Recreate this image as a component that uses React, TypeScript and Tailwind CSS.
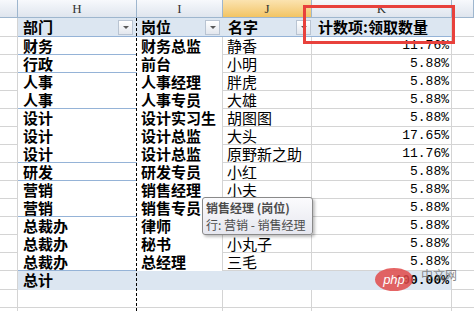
import React from 'react'

const rows = [
  { dept: '财务', pos: '财务总监', name: '静香', val: '11.76%', end: true },
  { dept: '行政', pos: '前台', name: '小明', val: '5.88%', end: true },
  { dept: '人事', pos: '人事经理', name: '胖虎', val: '5.88%', end: false },
  { dept: '人事', pos: '人事专员', name: '大雄', val: '5.88%', end: true },
  { dept: '设计', pos: '设计实习生', name: '胡图图', val: '5.88%', end: false },
  { dept: '设计', pos: '设计总监', name: '大头', val: '17.65%', end: false },
  { dept: '设计', pos: '设计总监', name: '原野新之助', val: '11.76%', end: true },
  { dept: '研发', pos: '研发专员', name: '小红', val: '5.88%', end: true },
  { dept: '营销', pos: '销售经理', name: '小夫', val: '5.88%', end: false },
  { dept: '营销', pos: '销售专员', name: '风间', val: '5.88%', end: true },
  { dept: '总裁办', pos: '律师', name: '阿呆', val: '5.88%', end: false },
  { dept: '总裁办', pos: '秘书', name: '小丸子', val: '5.88%', end: false },
  { dept: '总裁办', pos: '总经理', name: '三毛', val: '5.88%', end: true },
]

const cjk = "font-['Noto_Sans_CJK_SC',sans-serif]"

function Dropdown() {
  return (
    <div className="w-[15px] h-[15px] border border-[#b9c4d2] bg-gradient-to-b from-[#ffffff] to-[#e3e7ee] flex items-center justify-center">
      <div className="w-0 h-0 border-l-[3px] border-r-[3px] border-t-[3px] border-l-transparent border-r-transparent border-t-[#5a5a5a]" />
    </div>
  )
}

function ColHead({ label, w, active }: { label: string; w: string; active?: boolean }) {
  return (
    <div
      className={`${w} h-[18px] border-r border-b border-[#9eb6ce] flex items-center justify-center text-[13px] text-[#333] font-['Liberation_Serif',serif] ${
        active ? 'bg-gradient-to-b from-[#fbe3b0] to-[#f2c462]' : 'bg-gradient-to-b from-[#f7f9fc] to-[#dfe5ee]'
      }`}
    >
      {label}
    </div>
  )
}

export default function App() {
  return (
    <div className={`relative w-[474px] h-[311px] overflow-hidden bg-white ${cjk} text-[15px] leading-[18px] text-black`}>
      {/* column letters */}
      <div className="flex">
        <ColHead label="" w="w-[18px]" />
        <ColHead label="H" w="w-[119px]" />
        <ColHead label="I" w="w-[86px]" />
        <ColHead label="J" w="w-[89px]" active />
        <ColHead label="K" w="w-[140px]" />
        <ColHead label="" w="w-[22px]" />
      </div>

      {/* pivot header */}
      <div className="flex h-[19px]">
        <div className="w-[18px] border-r border-b border-[#d4d4d4]" />
        <div className="w-[119px] bg-[#dce6f1] border-b border-[#95b3d7] flex items-center justify-between pl-[5px] pr-[4px] font-bold">
          <span>部门</span>
          <Dropdown />
        </div>
        <div className="w-[86px] bg-[#dce6f1] border-b border-[#95b3d7] flex items-center justify-between pl-[4px] pr-[3px] font-bold">
          <span>岗位</span>
          <Dropdown />
        </div>
        <div className="w-[89px] bg-[#dce6f1] border-b border-[#95b3d7] flex items-center justify-between pl-[5px] pr-[1px] font-bold">
          <span>名字</span>
          <Dropdown />
        </div>
        <div className="w-[140px] bg-[#dce6f1] border-b border-[#95b3d7] border-r border-r-[#d4d4d4] flex items-center pl-[6px] font-bold">
          计数项:领取数量
        </div>
        <div className="w-[22px] border-b border-[#d4d4d4]" />
      </div>

      {/* data rows */}
      {rows.map((r, i) => (
        <div key={i} className="flex h-[18px]">
          <div className="w-[18px] border-r border-b border-[#d4d4d4]" />
          <div className={`w-[119px] pl-[5px] font-bold border-b ${r.end ? 'border-[#95b3d7]' : 'border-white'}`}>{r.dept}</div>
          <div className="w-[86px] pl-[4px] font-bold border-r border-[#d4d4d4] whitespace-nowrap overflow-hidden">{r.pos}</div>
          <div className="w-[89px] pl-[4px] border-r border-b border-[#d4d4d4] whitespace-nowrap overflow-hidden">{r.name}</div>
          <div className="w-[140px] pr-[2px] border-r border-b border-[#d4d4d4] text-right font-['Liberation_Mono',monospace] text-[13px] leading-[18px]">
            {r.val}
          </div>
          <div className="w-[22px] border-b border-[#d4d4d4]" />
        </div>
      ))}

      {/* total row */}
      <div className="flex h-[19px]">
        <div className="w-[18px] border-r border-b border-[#d4d4d4]" />
        <div className="w-[119px] pl-[5px] font-bold bg-[#dce6f1]">总计</div>
        <div className="w-[86px] bg-[#dce6f1]" />
        <div className="w-[89px] bg-[#dce6f1]" />
        <div className="w-[140px] pr-[2px] bg-[#dce6f1] border-r border-[#d4d4d4] text-right font-bold font-['Liberation_Mono',monospace] text-[13px] leading-[19px]">
          100.00%
        </div>
        <div className="w-[22px] border-b border-[#d4d4d4]" />
      </div>

      {/* empty rows */}
      {[0, 1].map((k) => (
        <div key={k} className="flex h-[18px]">
          <div className="w-[18px] border-r border-b border-[#d4d4d4]" />
          <div className="w-[119px] border-b border-[#d4d4d4]" />
          <div className="w-[86px] border-r border-b border-[#d4d4d4]" />
          <div className="w-[89px] border-r border-b border-[#d4d4d4]" />
          <div className="w-[140px] border-r border-b border-[#d4d4d4]" />
          <div className="w-[22px] border-b border-[#d4d4d4]" />
        </div>
      ))}

      {/* copy marquee between H and I */}
      <div className="absolute left-[136px] top-[18px] bottom-0 border-l border-dashed border-black" />

      {/* red highlight box */}
      <div className="absolute left-[303px] top-[5px] w-[152px] h-[39px] border-[3px] border-[#e8413c]" />

      {/* tooltip */}
      <div className="absolute left-[202px] top-[197px] w-[111px] h-[38px] rounded-[3px] border border-[#8a8a8a] bg-gradient-to-b from-[#fbfbfd] to-[#e6e7ef] shadow-[2px_2px_3px_rgba(0,0,0,0.25)] px-[3px] pt-[1px] text-[12px] leading-[17px] text-[#4c4c4c] whitespace-nowrap">
        <div className="font-bold">销售经理 (岗位)</div>
        <div>行: 营销 - 销售经理</div>
      </div>

      {/* watermark */}
      <div className="absolute left-[375px] top-[268px] w-[38px] h-[23px] rounded-[50%] bg-[#e04a4a]/85 flex items-center justify-center text-white text-[13px] italic font-['Liberation_Sans',sans-serif]">
        php
      </div>
      <div className="absolute left-[421px] top-[268px] text-[12px] leading-[14px] text-[#6a6a6a]/80">中文网</div>
    </div>
  )
}
